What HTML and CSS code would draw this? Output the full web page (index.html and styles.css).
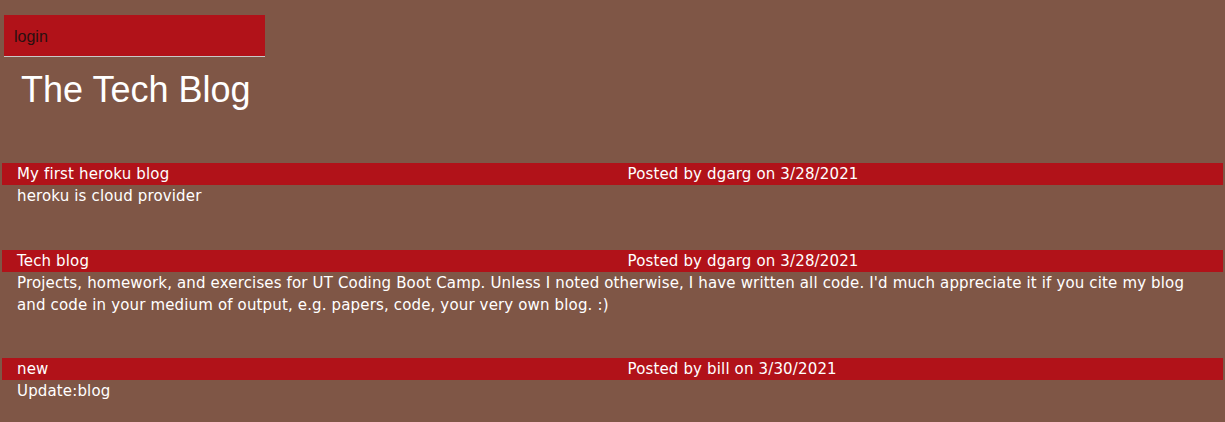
FILE: index.html
```html
<!DOCTYPE html>
<html>
<head>
<meta charset="utf-8">
<title>The Tech Blog</title>
<link rel="stylesheet" href="styles.css">
</head>
<body>
<div class="page">
  <nav class="nav">
    <a class="nav-link">login</a>
  </nav>
  <header class="site-header">
    <h1 class="site-title">The Tech Blog</h1>
  </header>
  <main class="posts">
    <article class="post">
      <div class="post-head">
        <div class="post-title">My first heroku blog</div>
        <div class="post-meta">Posted by dgarg on 3/28/2021</div>
      </div>
      <div class="post-body">heroku is cloud provider</div>
    </article>
    <article class="post">
      <div class="post-head">
        <div class="post-title">Tech blog</div>
        <div class="post-meta">Posted by dgarg on 3/28/2021</div>
      </div>
      <div class="post-body">Projects, homework, and exercises for UT Coding Boot Camp. Unless I noted otherwise, I have written all code. I'd much appreciate it if you cite my blog and code in your medium of output, e.g. papers, code, your very own blog. :)</div>
    </article>
    <article class="post">
      <div class="post-head">
        <div class="post-title">new</div>
        <div class="post-meta">Posted by bill on 3/30/2021</div>
      </div>
      <div class="post-body">Update:blog</div>
    </article>
  </main>
</div>
</body>
</html>
```

FILE: styles.css
```css
html, body {
  margin: 0;
  padding: 0;
  background: #7f5646;
}
.page {
  padding: 15px 2px 0 2px;
}
.nav {
  margin-left: 2px;
  width: 261px;
  height: 41px;
  background: #b11219;
  border-bottom: 1px solid #c8c8c8;
  display: flex;
  align-items: center;
}
.nav-link {
  font-family: "Liberation Sans", Arial, sans-serif;
  font-size: 16px;
  color: #2a1010;
  padding-left: 10px;
  padding-top: 2px;
}
.site-header {
  padding: 13px 0 0 19px;
  height: 106px;
  box-sizing: border-box;
}
.site-title {
  margin: 0;
  font-family: "Liberation Sans", Arial, sans-serif;
  font-weight: normal;
  font-size: 36px;
  line-height: 40px;
  color: #ffffff;
}
.posts {
  font-family: "DejaVu Sans", Verdana, sans-serif;
  font-size: 15px;
  letter-spacing: 0.15px;
  line-height: 22px;
  color: #ffffff;
}
.post {
  margin-bottom: 43px;
}
.post:nth-child(2) {
  margin-bottom: 42px;
}
.post:last-child {
  margin-bottom: 20px;
}
.post-head {
  display: flex;
  background: #b11219;
  height: 22px;
}
.post-title, .post-meta {
  flex: 1;
  padding-left: 15px;
}
.post-body {
  padding: 0 15px;
}
```
